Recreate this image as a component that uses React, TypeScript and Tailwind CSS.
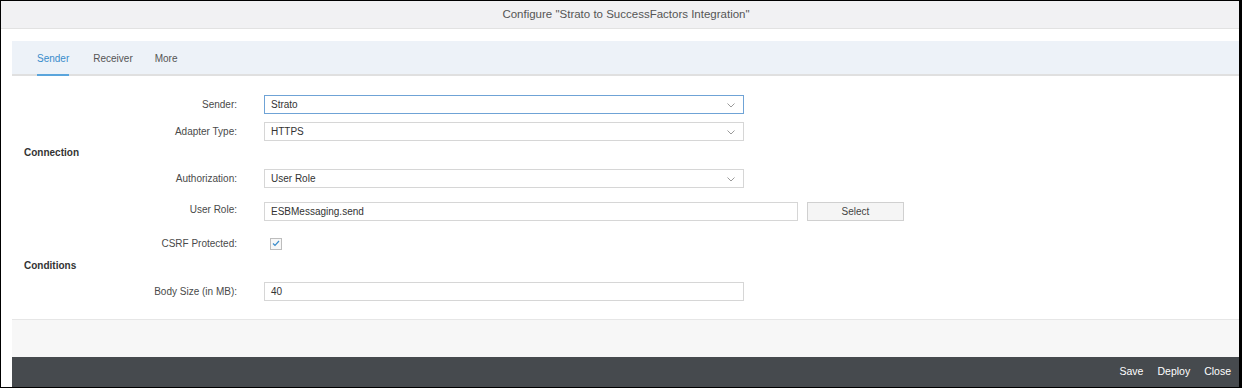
import React from "react";

function Chevron() {
  return (
    <svg width="8" height="5" viewBox="0 0 8 5" className="absolute right-[8px] top-[7px]">
      <path d="M0.5 0.5 L4 4 L7.5 0.5" fill="none" stroke="#9a9a9a" strokeWidth="1" />
    </svg>
  );
}

function Label({ text, className = "" }: { text: string; className?: string }) {
  return (
    <div className={`w-[225px] shrink-0 text-right text-[10px] text-[#4a4a4a] ${className}`}>{text}</div>
  );
}

function SelectBox({ value, focused = false }: { value: string; focused?: boolean }) {
  return (
    <div
      className={`relative ml-[27px] flex h-[19px] w-[480px] items-center border bg-white pl-[6px] text-[10px] text-[#333] ${
        focused ? "border-[#6fa3d6]" : "border-[#d6d6d6]"
      }`}
    >
      {value}
      <Chevron />
    </div>
  );
}

export default function App() {
  return (
    <div
      className="flex h-[388px] w-[1242px] flex-col border-t border-b border-l border-r-[3px] border-black bg-white"
      style={{ fontFamily: '"Liberation Sans", Arial, sans-serif' }}
    >
      <div className="flex h-[28px] shrink-0 items-center justify-center border-b border-[#e2e2e2] bg-[#f1f1f3] pl-[12px] text-[11.5px] text-[#555]">
        Configure "Strato to SuccessFactors Integration"
      </div>
      <div className="ml-[11px] mt-[12px] flex flex-1 flex-col">
        <div className="flex h-[35px] shrink-0 items-stretch border-b-2 border-[#e0e0e0] bg-[#edf2f8] pl-[25px] pt-[1px] text-[10px]">
          <div className="relative flex items-center text-[#3a8ccb]">
            Sender
            <div className="absolute -bottom-[2px] left-0 right-0 h-[2px] bg-[#5aa5dc]" />
          </div>
          <div className="ml-[24px] flex items-center text-[#555]">Receiver</div>
          <div className="ml-[22px] flex items-center text-[#555]">More</div>
        </div>

        <div className="flex flex-col pt-[19px]">
          <div className="flex items-center">
            <Label text="Sender:" />
            <SelectBox value="Strato" focused />
          </div>
          <div className="mt-[8px] flex items-center">
            <Label text="Adapter Type:" />
            <SelectBox value="HTTPS" />
          </div>
          <div className="mt-[4px] flex h-[14px] items-center pl-[12px] text-[10px] font-bold text-[#333]">
            Connection
          </div>
          <div className="mt-[10px] flex items-center">
            <Label text="Authorization:" />
            <SelectBox value="User Role" />
          </div>
          <div className="mt-[14px] flex items-start">
            <Label text="User Role:" />
            <div className="ml-[27px] flex h-[19px] w-[534px] items-center border border-[#d6d6d6] bg-white pl-[6px] text-[10px] text-[#333]">
              ESBMessaging.send
            </div>
            <div className="ml-[9px] flex h-[19px] w-[97px] items-center justify-center border border-[#d0d0d0] bg-[#f5f5f5] text-[10px] text-[#444]">
              Select
            </div>
          </div>
          <div className="mt-[13px] flex h-[19px] items-center">
            <Label text="CSRF Protected:" />
            <div className="ml-[33px] flex h-[12px] w-[12px] items-center justify-center border border-[#bdbdbd] bg-[#f7f7f7]">
              <svg width="8" height="7" viewBox="0 0 8 7">
                <path d="M1 3.5 L3 5.5 L7 1" fill="none" stroke="#3a8ccb" strokeWidth="1.2" />
              </svg>
            </div>
          </div>
          <div className="mt-[5px] flex h-[14px] items-center pl-[12px] text-[10px] font-bold text-[#333]">
            Conditions
          </div>
          <div className="mt-[10px] flex items-center">
            <Label text="Body Size (in MB):" />
            <div className="ml-[27px] flex h-[19px] w-[480px] items-center border border-[#d6d6d6] bg-white pl-[6px] text-[10px] text-[#333]">
              40
            </div>
          </div>
        </div>

        <div className="mt-auto flex flex-col">
          <div className="h-[38px] border-t border-[#e6e6e6] bg-[#f7f7f7]" />
          <div className="flex h-[30px] items-center justify-end gap-[14px] bg-[#464a4e] pr-[8px] text-[10.5px] text-white">
            <span>Save</span>
            <span>Deploy</span>
            <span>Close</span>
          </div>
        </div>
      </div>
    </div>
  );
}
